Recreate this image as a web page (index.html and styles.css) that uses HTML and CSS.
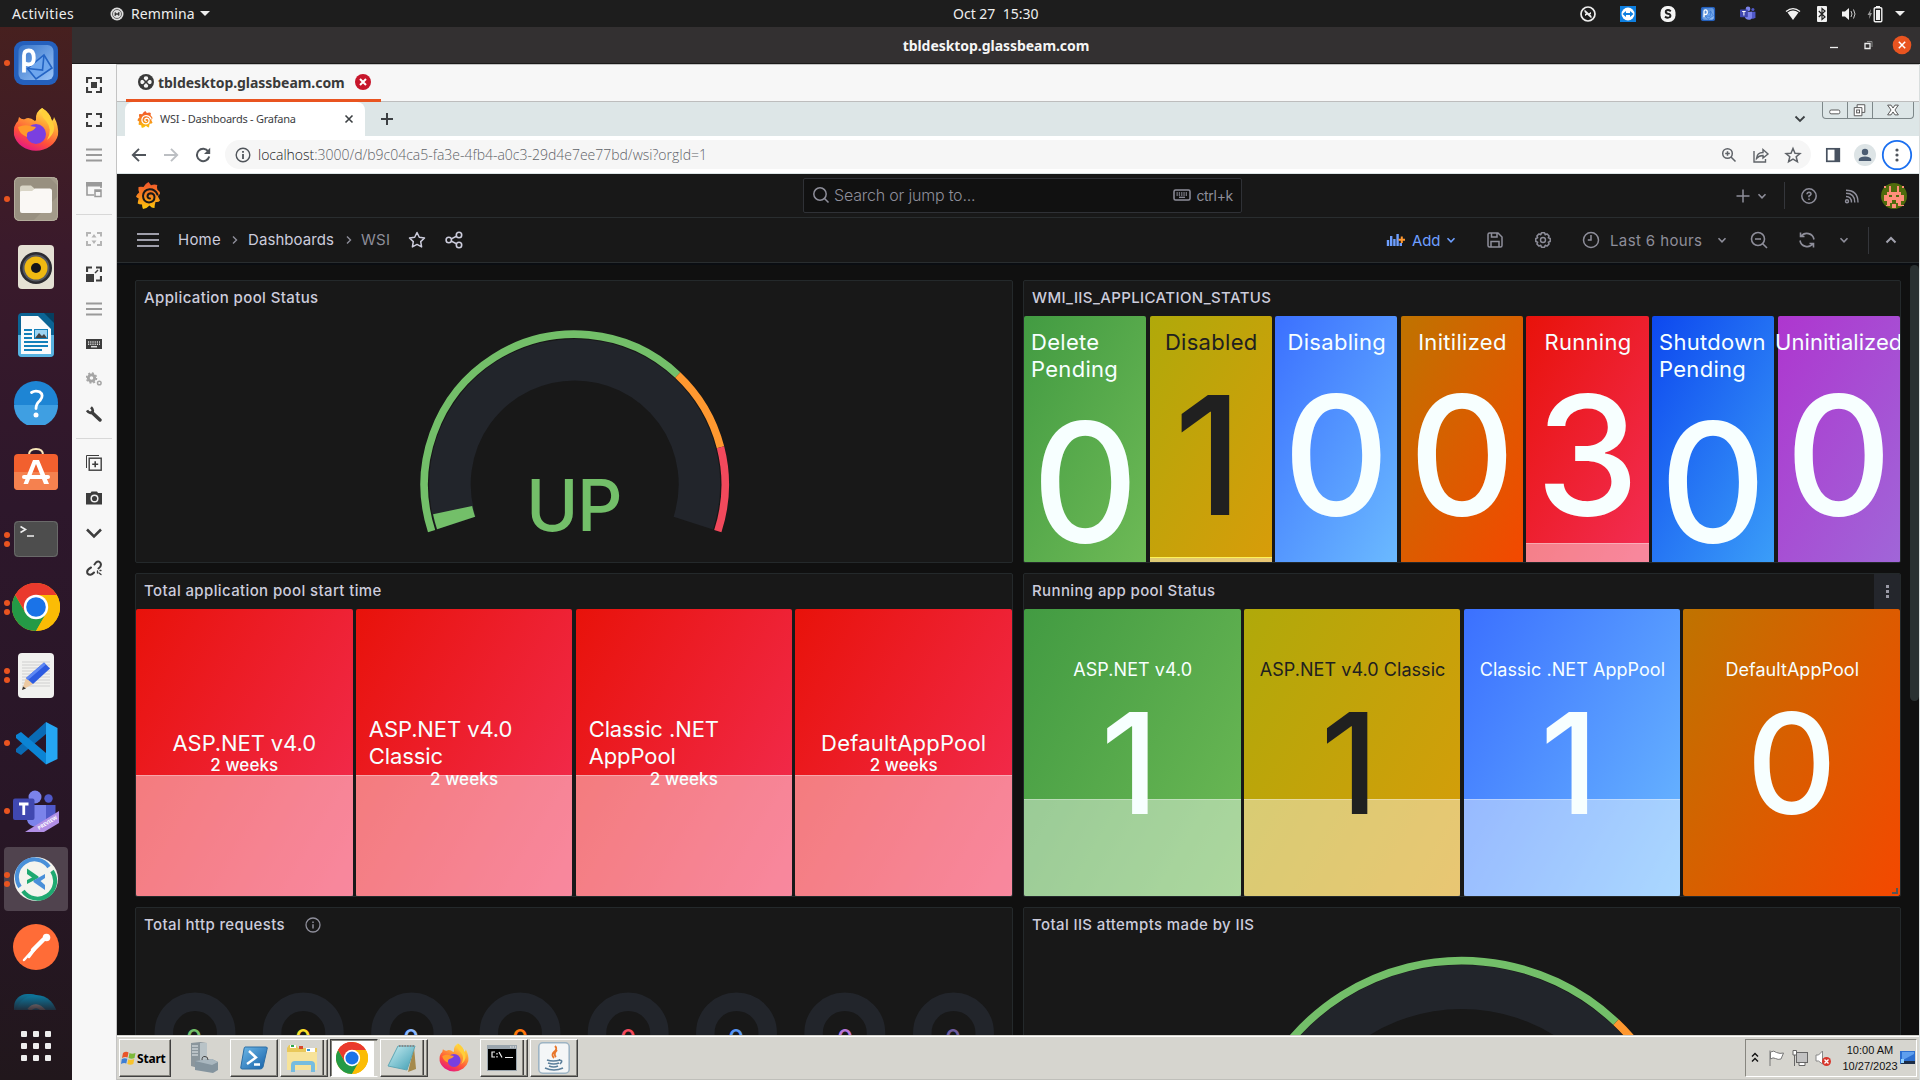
FILE: index.html
```
<!DOCTYPE html>
<html lang="en">
<head>
<meta charset="utf-8">
<title>tbldesktop.glassbeam.com</title>
<link rel="stylesheet" href="styles.css">
</head>
<body>
<svg class="defs" width="0" height="0">
  <defs>
    <linearGradient id="gLogo" x1="0" y1="0" x2="0" y2="1"><stop offset="0" stop-color="#f2552c"/><stop offset=".5" stop-color="#f58220"/><stop offset="1" stop-color="#fdca0a"/></linearGradient>
    <linearGradient id="gFox" x1=".8" y1="0" x2=".3" y2="1"><stop offset="0" stop-color="#fff44f"/><stop offset=".35" stop-color="#ffa436"/><stop offset=".7" stop-color="#ff4f3a"/><stop offset="1" stop-color="#e31587"/></linearGradient>
    <linearGradient id="gBlue" x1="0" y1="0" x2="1" y2="1"><stop offset="0" stop-color="#3674c9"/><stop offset="1" stop-color="#9ac4f8"/></linearGradient>
    <linearGradient id="gPs" x1="0" y1="0" x2="1" y2="1"><stop offset="0" stop-color="#6fb9e8"/><stop offset="1" stop-color="#1560a8"/></linearGradient>
    <linearGradient id="gNote" x1="0" y1="0" x2="1" y2="1"><stop offset="0" stop-color="#c9eef2"/><stop offset="1" stop-color="#3d9db3"/></linearGradient>
    <symbol id="grafana" viewBox="0 0 24 27">
      <path fill="url(#gLogo)" d="M12.500 0 L15 3.200 Q18.500 2 21.300 3 Q20.500 5.500 21.300 7.600 Q24 9.500 24 12 Q22 13.300 22 14.500 L24 18.500 Q22.500 20.500 19.500 20 Q18.700 22.500 18.500 26 Q16 26.300 13.500 23.500 Q11 26.500 7 27 Q6 24.500 6 22.500 Q3 22.500 1.700 21.500 Q2 18.500 2.700 16.500 Q.5 15.500 0 14.500 Q1 12 3.200 10.500 Q2 8 2.500 5 Q5 4.700 7.500 5 Q9.500 1.500 12.500 0Z"/>
      <path fill="none" stroke="currentColor" stroke-width="2" stroke-linecap="round" d="M21.500 12.500 Q19 7 13.500 7.300 Q7.500 8 7 14 Q7.300 20 13 20.500 Q18.500 20 18.500 15 Q18 11.300 14.500 11.300 Q11.500 11.800 11.500 14.500 Q12 16.500 14 16.500"/>
    </symbol>
    <symbol id="firefox" viewBox="0 0 46 46">
      <path fill="url(#gFox)" d="M29 0 Q37 5 39 13 Q41 11 41 9 Q46 18 45 27 A22.500 20 0 0 1 1 27 Q0 17 5 13 L6 9 Q9 12 12 11 Q16 8 22 13 L23 12 Q22 4 29 0Z"/>
      <circle cx="23" cy="26" r="10" fill="#7a3fe0"/>
      <path fill="#ff9a2b" d="M5 19 Q12 16 17 18 L23 19 Q21 23 15 24 Q13 26 14 29 Q6 26 5 19Z"/>
      <path fill="#ffcf3a" d="M29 0 Q27 8 33 13 Q40 21 34 32 Q45 23 39 13 Q37 5 29 0Z"/>
    </symbol>
    <symbol id="chrome" viewBox="0 0 48 48">
      <circle cx="24" cy="24" r="24" fill="#fbbc05"/>
      <path fill="#ea3a2d" d="M24 24 L3.200 12 A24 24 0 0 1 44.800 12Z"/>
      <path fill="#ea3a2d" d="M24 12 H44.800 L36 24 H24Z"/>
      <path fill="#249a46" d="M3.200 12 A24 24 0 0 0 24 48 L34.400 30 L24 24 L13.600 30Z"/>
      <path fill="#ea3a2d" d="M24 12 L13.600 30 L3.200 12 Q10 0 24 0Z"/>
      <path fill="#fbbc05" d="M24 12 H44.800 A24 24 0 0 1 24 48 L34.400 30Z"/>
      <circle cx="24" cy="24" r="12.200" fill="#fff"/><circle cx="24" cy="24" r="9.800" fill="#1a73e8"/>
    </symbol>
    <symbol id="teams" viewBox="0 0 44 42">
      <circle cx="22" cy="7" r="6.500" fill="#7b83eb"/><circle cx="35.500" cy="8.500" r="4.200" fill="#5059c9"/>
      <path fill="#5059c9" d="M30 15 H42.500 V30 Q41 34 36 34 H30Z"/><path fill="#7b83eb" d="M14 15 H33 V30 Q32 37 24 37 Q15 36 14 30Z"/>
      <rect y="8.500" width="21.500" height="21.500" rx="2" fill="#4048b0"/><path stroke="#fff" stroke-width="2.800" d="M6 14 H15.500 M10.750 14 V25"/>
    </symbol>
    <symbol id="pmail" viewBox="0 0 44 44">
      <rect width="44" height="44" rx="9" fill="#2460bd"/><rect x="4.500" y="4" width="35" height="35" rx="6" fill="url(#gBlue)"/>
      <path fill="#6ea6ee" stroke="#2464c4" stroke-width="1.600" d="M13.500 27.500 L30 14 L38 27 L22 38Z"/><path fill="none" stroke="#2464c4" stroke-width="1.600" d="M13.500 27.500 L28.500 29 L30 14"/>
      <path fill="none" stroke="#fff" stroke-width="3.800" d="M10 31.500 V14.500 Q10 9.500 14.800 9.500 Q19.800 9.500 19.800 17 Q19.800 23.500 14.800 23.500 Q12 23.500 10 21.500"/>
    </symbol>
    <symbol id="down" viewBox="0 0 12 12"><path fill="none" stroke="currentColor" stroke-width="1.600" d="M2.500 4.300 L6 7.800 L9.500 4.300"/></symbol>
    <symbol id="lines" viewBox="0 0 16 14"><path stroke="#9a9a9a" stroke-width="2.200" d="M0 1.500H16M0 7H16M0 12.500H16"/></symbol>
  </defs>
</svg>

<header class="topbar">
  <div class="topbar-left"><span class="activities">Activities</span>
    <svg width="14" height="14" viewBox="0 0 14 14"><circle cx="7" cy="7" r="6.500" fill="#ddd"/><circle cx="7" cy="7" r="4.500" fill="none" stroke="#666"/><path stroke="#555" d="M5 9V5.500L9 8.500V5"/></svg>
    <span class="app-name">Remmina</span><i class="caret"></i></div>
  <span class="clock">Oct 27&nbsp; 15:30</span>
  <div class="tray">
    <svg viewBox="0 0 20 20"><circle cx="10" cy="10" r="7" fill="none" stroke="#eee" stroke-width="1.700"/><path fill="#eee" d="M6.500 5.500L11 9.500L7 12V10L8 9.500L6.500 8Z M13.500 14.500L9 10.500L13 8V10L12 10.500L13.500 12Z"/></svg>
    <svg viewBox="0 0 20 20"><rect x="2" y="2" width="16" height="16" fill="#0e7fe0"/><circle cx="10" cy="10" r="6.500" fill="#fff"/><path fill="#0e7fe0" d="M4.500 10L8 7V9H12V7L15.500 10L12 13V11H8V13Z"/></svg>
    <svg viewBox="0 0 20 20"><rect x="2.500" y="2" width="15" height="16" rx="6.500" fill="#f5f5f5"/><path fill="none" stroke="#222" stroke-width="2" d="M12.800 7.200Q10 5 8 6.800Q7 9 10 9.800Q13.500 10.500 12 13Q9.500 14.500 7 12.600"/></svg>
    <svg viewBox="-8 -8 60 60"><use href="#pmail" width="44" height="44"/></svg>
    <svg viewBox="0 0 20 20"><use href="#teams" x="2" y="2" width="16" height="16"/></svg>
    <svg class="ml-25" viewBox="0 0 20 20"><path fill="#f2f2f2" d="M4.500 8.500Q10 4.500 15.500 8.500L10 16Z"/><path fill="none" stroke="#f2f2f2" stroke-width="1.300" d="M3 7.500Q10 1.800 17 7.500"/></svg>
    <svg class="ml-9" viewBox="0 0 20 20"><rect x="5" y="2" width="10" height="16" rx="1" fill="#f2f2f2"/><path fill="none" stroke="#222" stroke-width="1.200" d="M6.800 7L13 13L10 15.500V4.500L13 7L6.800 13"/></svg>
    <svg class="ml-7" viewBox="0 0 20 20"><path fill="#f2f2f2" d="M3 7.500H6L10 4V16L6 12.500H3Z"/><path fill="none" stroke="#f2f2f2" d="M12 7Q14 10 12 13M14.500 5.500Q17.500 10 14.500 14.500" opacity=".8"/></svg>
    <svg class="ml-7" viewBox="0 0 20 20"><path fill="#999" d="M5 5L1.500 11H3.500L3 15L6 9H4.200Z"/><rect x="8.200" y="3.700" width="7.600" height="14" rx="1" fill="none" stroke="#f2f2f2" stroke-width="1.400"/><rect x="10" y="6" width="4" height="10" fill="#f2f2f2"/><rect x="10" y="2" width="4" height="2" fill="#f2f2f2"/></svg>
    <span class="caret-box"><i class="caret"></i></span>
  </div>
</header>

<div class="desktop">
<nav class="dock">
  <div class="slot one"><svg width="44" height="44"><use href="#pmail"/></svg></div>
  <div class="slot"><svg width="46" height="46"><use href="#firefox"/></svg></div>
  <div class="slot one"><svg width="44" height="44" viewBox="0 0 44 44"><rect width="44" height="44" rx="5" fill="#989080"/><path d="M36 1 H43 V8Z M20 43L43 20V43Z" fill="#a39b8a"/><rect x=".5" y=".5" width="43" height="43" rx="5" fill="none" stroke="#b4ad9c"/><path fill="#d9d5c6" d="M6 13V11Q6 8.500 8.500 8.500H17L21 12H35Q38 12 38 15V18H6Z"/><path fill="#faf8f5" d="M6 15Q6 14 8 14H18L21 11.500H36Q38 11.500 38 14V34Q38 36 36 36H8Q6 36 6 34Z"/></svg></div>
  <div class="slot"><svg width="36" height="44" viewBox="0 0 36 44"><rect width="36" height="44" rx="4" fill="#e4e0d4"/><circle cx="18" cy="23" r="16" fill="#2b2b31"/><circle cx="18" cy="23" r="13.500" fill="#555963"/><circle cx="18" cy="23" r="11.500" fill="#efb912"/><circle cx="18" cy="23" r="5" fill="#15151a"/></svg></div>
  <div class="slot"><svg width="36" height="44" viewBox="0 0 36 44"><rect width="36" height="44" rx="4" fill="#0b6494"/><path fill="#58b3e0" d="M0 22H36V40Q36 44 32 44H4Q0 44 0 40Z"/><path fill="#fbfbfb" d="M3 3H20L33 16V41H3Z"/><path fill="#063f60" d="M26 0H36V10Z"/><path stroke="#1480ba" stroke-width="2" d="M6 17H14M6 21H14M6 25H14M6 29H30M6 33H30M6 37H24"/><rect x="16" y="16" width="14" height="10" fill="#1480ba"/><rect x="17" y="17" width="12" height="8" fill="#9dd4f2"/><path fill="#444" d="M17 25L21 20L24 23L26 21L29 25Z"/></svg></div>
  <div class="slot"><svg width="44" height="44" viewBox="0 0 44 44"><circle cx="22" cy="22" r="22" fill="#1e85d4"/><path fill="#3f9fe2" d="M0 24H44A22 22 0 0 1 0 24Z"/><path fill="none" stroke="#fff" stroke-width="2.800" stroke-linecap="round" d="M17.500 11.500Q21 9 25.500 10.800Q30.500 14 26 19.500Q22 23 22 27.500"/><circle cx="22" cy="34" r="2.500" fill="#fff"/></svg></div>
  <div class="slot software"><svg width="44" height="44" viewBox="0 0 44 44"><path fill="none" stroke="#f7e6b8" stroke-width="2" d="M15 10V8Q15 2 22 2Q29 2 29 8V10"/><rect y="7" width="44" height="36" rx="4" fill="#f2602e"/><path fill="#f5814f" d="M0 25H44V39Q44 43 40 43H4Q0 43 0 39Z"/><path fill="#fff" d="M19 13H25L35 37H30L22 17L14 37H9.500Z"/><rect x="8" y="28" width="28" height="4" rx="2" fill="#fff"/></svg></div>
  <div class="slot two"><svg width="44" height="36" viewBox="0 0 44 36"><rect width="44" height="36" rx="4" fill="#4d4d4d"/><rect x=".5" y=".5" width="43" height="35" rx="4" fill="none" stroke="#6a6a6a"/><path fill="none" stroke="#eee" stroke-width="1.600" d="M6.500 5.500L11.500 8.500L6.500 11.500M13 15H20"/></svg></div>
  <div class="slot two"><svg width="48" height="48"><use href="#chrome"/></svg></div>
  <div class="slot two"><svg width="36" height="45" viewBox="0 0 36 45"><rect width="36" height="45" rx="4" fill="#f1f1ef"/><path stroke="#cfcfcf" stroke-width="1" d="M4 9H32M4 12H32M4 15H32M4 18H32M4 21H32M4 24H32M4 27H32M4 30H32M4 33H32"/><path fill="#ecc9a2" d="M4 37L8 25L15 31Z"/><path fill="#333" d="M4 37L5 33.500L8 35.500Z"/><path fill="#2d5be0" d="M8 25L26 9.500L32 15.500L15 31Z"/><path fill="#5e88f4" d="M8 25L26 9.500L28 11.500L10 27Z"/></svg></div>
  <div class="slot one"><svg width="43" height="43" viewBox="0 0 43 43"><path fill="#0a6bb5" d="M1 27L31 0V12L6 33L1 30Z"/><path fill="#0b84d4" d="M1 16V13L6 10L31 31V42.500Z"/><path fill="#25a6f2" d="M31 0L42.500 6V37L31 42.500Z"/></svg></div>
  <div class="slot one"><svg width="46" height="44" viewBox="0 0 46 44"><use href="#teams" width="44" height="42" y="1"/><path fill="#b18fe6" d="M12 43L46 22V34L31 43Z"/><text class="ribbon" transform="translate(26 41) rotate(-32)">PREVIEW</text></svg></div>
  <div class="slot two active"><svg width="44" height="44" viewBox="0 0 44 44"><circle cx="22" cy="22" r="22" fill="#f4f4ee"/><g fill="none" stroke-width="4"><path stroke="#4a90d9" d="M6 30A17.500 17.500 0 0 1 35 10"/><path stroke="#1fa971" d="M38 14A17.500 17.500 0 0 1 9 34"/></g><path fill="#1fa971" d="M13 11.500L24.500 19.500V21L13 27V23L18 20.500L13 17Z"/><path fill="#4a90d9" d="M31 17V21L26.500 24L31 28V33L19.500 25V23.500Z"/></svg></div>
  <div class="slot"><svg width="46" height="46" viewBox="0 0 46 46"><circle cx="23" cy="23" r="23" fill="#ff6c37"/><g fill="none" stroke="#fff" stroke-linecap="round"><path stroke-width="4.500" d="M30 16L20 26"/><path stroke-width="2.500" d="M20 26L11 36M22 25L16 33"/></g><circle cx="33.500" cy="13.500" r="3.800" fill="#fff"/></svg></div>
  <div class="slot clipped"><svg width="44" height="44" viewBox="0 0 44 44"><rect width="30" height="30" rx="13" fill="#0c7ba3"/><circle cx="22" cy="22" r="21" fill="#0a86b0"/><path fill="none" stroke="#a9a9a9" stroke-width="4" d="M30 17Q22 8 15 16"/></svg></div>
  <div class="apps"><i></i><i></i><i></i><i></i><i></i><i></i><i></i><i></i><i></i></div>
</nav>

<section class="window">
  <div class="titlebar"><span class="title">tbldesktop.glassbeam.com</span>
    <div class="win-buttons">
      <svg viewBox="0 0 20 20"><path stroke="#eee" stroke-width="1.300" d="M6 12.500H14"/></svg>
      <svg viewBox="0 0 20 20"><path fill="none" stroke="#eee" stroke-width="1.300" d="M7 8.500H12V13.500H7Z"/><path fill="none" stroke="#888" d="M9 6.500H14V12"/></svg>
      <svg viewBox="0 0 20 20"><circle cx="10" cy="10" r="9.300" fill="#e95420"/><path stroke="#fff" stroke-width="1.500" d="M6.800 6.800L13.200 13.200M13.200 6.800L6.800 13.200"/></svg>
    </div>
  </div>
  <div class="window-body">
    <aside class="tools">
      <svg viewBox="0 0 16 16"><path fill="none" stroke="#3d3d3d" stroke-width="2.200" d="M1 6V1H6M10 1H15V6M15 10V15H10M6 15H1V10"/><rect x="5" y="5" width="6" height="6" fill="#3d3d3d"/></svg>
      <svg viewBox="0 0 16 16"><path fill="none" stroke="#3d3d3d" stroke-width="2.200" d="M1 6V2H6M10 2H15V6M15 10V14H10M6 14H1V10"/></svg>
      <svg viewBox="0 0 16 14"><use href="#lines"/></svg>
      <svg viewBox="0 0 16 16"><path fill="none" stroke="#9a9a9a" stroke-width="1.600" d="M8 13H1V1H15V6"/><rect x="0" y="0" width="16" height="4.500" fill="#9a9a9a"/><rect x="9" y="8" width="6" height="6.500" fill="none" stroke="#9a9a9a" stroke-width="1.500"/><path stroke="#9a9a9a" stroke-width="2" d="M9 9H15"/></svg>
      <hr>
      <svg viewBox="0 0 16 16"><path fill="none" stroke="#b5b5b5" stroke-width="2" d="M1 5.500V2H5M11 2H15V5.500M15 10V14H11M5 14H1V10"/><path fill="#b5b5b5" d="M8 3L10.500 6.500H5.500ZM8 13L5.500 9.500H10.500ZM3 8H5M11 8H13"/></svg>
      <svg viewBox="0 0 16 16"><path fill="none" stroke="#3d3d3d" stroke-width="2.200" d="M1 6V1.500H6M10 1.500H15V6M15 10V14.500H10"/><rect x="0" y="8" width="8" height="8" fill="#3d3d3d"/><path stroke="#3d3d3d" stroke-width="1.500" d="M9 7L12 4"/></svg>
      <svg viewBox="0 0 16 14"><use href="#lines"/></svg>
      <svg viewBox="0 0 16 16"><rect y="3" width="16" height="10" fill="#3d3d3d"/><path stroke="#ddd" stroke-width="1.500" stroke-dasharray="1.200 1" d="M2 6H14M2 8.300H14"/><path stroke="#ddd" stroke-width="1.500" d="M5 10.700H11"/></svg>
      <svg viewBox="0 0 16 16"><g fill="none" stroke="#a5a5a5"><circle cx="5.500" cy="7" r="3.200" stroke-width="2.800"/><circle cx="5.500" cy="7" r="5" stroke-width="1.500" stroke-dasharray="2 1.900"/><circle cx="13.300" cy="12" r="1.800" stroke-width="1.500"/></g></svg>
      <svg viewBox="0 0 16 16"><path stroke="#3d3d3d" stroke-width="3.400" stroke-linecap="round" d="M6 6.500L14 14"/><path fill="none" stroke="#3d3d3d" stroke-width="2.600" d="M1 4.500Q3 8 6 6.500Q8 4 5 1.200"/></svg>
      <hr>
      <svg viewBox="0 0 16 16"><path fill="none" stroke="#3d3d3d" d="M.5 13V.5H13"/><rect x="3.200" y="3.200" width="12" height="12" fill="none" stroke="#3d3d3d" stroke-width="1.400"/><path stroke="#3d3d3d" stroke-width="1.600" d="M9.200 6.200V12.200M6.200 9.200H12.200"/></svg>
      <svg viewBox="0 0 16 16"><path fill="#3d3d3d" d="M0 3H4.500L5.500 1.500H11L12 3H16V14.500H0Z"/><circle cx="8.500" cy="8.500" r="3.300" fill="none" stroke="#f0f0f0" stroke-width="1.500"/></svg>
      <svg viewBox="0 0 16 16"><path fill="none" stroke="#3d3d3d" stroke-width="2.500" d="M1 4.500L8 11.500L15 4.500"/></svg>
      <svg viewBox="0 0 16 16"><g fill="none" stroke="#3d3d3d" stroke-width="2" stroke-linecap="round"><path d="M8.500 4.500L10 2.500Q12.500 .3 14.500 3Q16 6 12.500 8.500M5 7.500Q0 10 1.500 13.500Q4.500 16.500 8 12.500"/><path stroke-width="1.300" d="M11.500 11V13M14 10.500H15M13 13L15 14.500" /></g></svg>
    </aside>

    <div class="session">
      <div class="session-tabs"><div class="session-tab">
        <svg width="16" height="16" viewBox="0 0 16 16"><circle cx="8" cy="8" r="8" fill="#3a3a3a"/><g fill="#f5f5f5"><circle cx="8" cy="4.600" r="2.300"/><circle cx="8" cy="11.400" r="2.300"/><circle cx="4.600" cy="8" r="2.300"/><circle cx="11.400" cy="8" r="2.300"/></g><path stroke="#3a3a3a" stroke-width="1.400" d="M4 4L12 12M12 4L4 12"/></svg>
        <span class="session-name">tbldesktop.glassbeam.com</span>
        <svg width="16" height="16" viewBox="0 0 16 16"><circle cx="8" cy="8" r="8" fill="#c7162b"/><path stroke="#fff" stroke-width="2" d="M5 5L11 11M11 5L5 11"/></svg>
      </div></div>

      <div class="chrome-tabs">
        <div class="chrome-tab">
          <svg class="favicon" width="16" height="17"><use href="#grafana"/></svg>
          <span class="tab-title">WSI - Dashboards - Grafana</span>
          <svg width="10" height="10" viewBox="0 0 10 10"><path stroke="#3c4043" stroke-width="1.600" d="M1.500 1.500L8.500 8.500M8.500 1.500L1.500 8.500"/></svg>
        </div>
        <svg class="new-tab" width="12" height="12" viewBox="0 0 12 12"><path stroke="#3c4043" stroke-width="2" d="M6 0V12M0 6H12"/></svg>
        <svg class="tab-search" width="12" height="12" viewBox="0 0 12 12"><path fill="none" stroke="#3c4043" stroke-width="1.800" d="M1.500 3.500L6 8L10.500 3.500"/></svg>
        <div class="aero">
          <svg viewBox="0 0 25 16"><rect x="7" y="8" width="10.500" height="4" rx="1.500" fill="#fff" stroke="#555"/></svg>
          <svg viewBox="0 0 25 16"><path fill="#fff" stroke="#555" d="M9.500 2.500H17.500V10.500H9.500Z"/><path fill="#fff" stroke="#555" d="M6.500 5.500H14.500V14H6.500Z"/><rect x="9" y="8" width="3" height="3" fill="none" stroke="#555"/></svg>
          <svg viewBox="0 0 41 16"><path fill="#fff" stroke="#555" d="M15 3H18.500L20.500 6L22.500 3H26L22.500 8L26 13H22.500L20.500 10L18.500 13H15L18.500 8Z"/></svg>
        </div>
      </div>

      <div class="address">
        <svg class="nav" viewBox="0 0 16 16"><path fill="none" stroke="#50555b" stroke-width="1.900" d="M15 8H2M8 1.800L1.800 8L8 14.200"/></svg>
        <svg class="nav" viewBox="0 0 16 16"><path fill="none" stroke="#bcbfc3" stroke-width="1.900" d="M1 8H14M8 1.800L14.200 8L8 14.200"/></svg>
        <svg class="nav" viewBox="0 0 16 16"><path fill="none" stroke="#50555b" stroke-width="2" d="M13.300 4.500A6.200 6.200 0 1 0 14.200 9.500"/><path fill="#50555b" d="M15.200 .8V7H9Z"/></svg>
        <div class="omnibox">
          <svg width="16" height="16" viewBox="0 0 16 16"><circle cx="8" cy="8" r="6.800" fill="none" stroke="#50555b" stroke-width="1.400"/><path stroke="#50555b" stroke-width="1.800" d="M8 7V12M8 4V5.800"/></svg>
          <span class="url"><b>localhost</b>:3000/d/b9c04ca5-fa3e-4fb4-a0c3-29d4e7ee77bd/wsi?orgId=1</span>
          <svg viewBox="0 0 20 20"><g fill="none" stroke="#5f6368" stroke-width="1.500"><circle cx="8.500" cy="8.500" r="4.800"/><path d="M12 12L16.500 16.500M8.500 6.200V10.800M6.200 8.500H10.800"/></g></svg>
          <svg viewBox="0 0 20 20"><path fill="none" stroke="#5f6368" stroke-width="1.400" d="M3 6V17H14.500V14M5.500 13.500Q6 7.500 12 7.500V4.500L17 9L12 13V10.500Q8 10.500 5.500 13.500Z"/></svg>
          <svg viewBox="0 0 20 20"><path fill="none" stroke="#5f6368" stroke-width="1.500" d="M10 3.500L12 8.200L17 8.600L13.200 11.800L14.400 16.700L10 14.100L5.600 16.700L6.800 11.800L3 8.600L8 8.200Z"/></svg>
        </div>
        <div class="chrome-menu">
          <svg viewBox="0 0 32 32"><rect x="9.800" y="9.800" width="12.500" height="12.500" fill="none" stroke="#485260" stroke-width="1.700"/><rect x="17.500" y="9" width="5.500" height="14" fill="#485260"/></svg>
          <svg viewBox="0 0 32 32"><circle cx="16" cy="16" r="11" fill="#dde4e6"/><circle cx="16" cy="13" r="3.200" fill="#4b5c72"/><path fill="#4b5c72" d="M9.800 22V20Q11 17.500 16 17.500Q21 17.500 22.200 20V22Z"/></svg>
          <svg viewBox="0 0 32 32"><circle cx="16" cy="16" r="14.200" fill="#fff" stroke="#1a6ff0" stroke-width="1.800"/><circle cx="16" cy="11" r="1.600" fill="#50555b"/><circle cx="16" cy="16" r="1.600" fill="#50555b"/><circle cx="16" cy="21" r="1.600" fill="#50555b"/></svg>
        </div>
      </div>

      <div class="gf-top">
        <svg class="gf-logo" width="24" height="27"><use href="#grafana"/></svg>
        <div class="search">
          <svg width="18" height="18" viewBox="0 0 18 18"><circle cx="8" cy="8" r="6.200" fill="none" stroke="#8e8e9a" stroke-width="1.500"/><path stroke="#8e8e9a" stroke-width="1.600" d="M12.500 12.500L16.500 16.500"/></svg>
          <span class="search-text">Search or jump to...</span>
          <svg width="18" height="12" viewBox="0 0 18 12"><rect x="1" y="1" width="16" height="10" rx="1.500" fill="none" stroke="#8e8e9a" stroke-width="1.500"/><path stroke="#8e8e9a" stroke-width="1.300" stroke-dasharray="1.300 1" d="M3.500 4H15M3.500 6H15"/><path stroke="#8e8e9a" stroke-width="1.300" d="M6 8.300H12"/></svg>
          <span class="kbd">ctrl+k</span>
        </div>
        <div class="bar-actions pad-12">
          <svg viewBox="0 0 20 20"><path stroke="#8e8e9a" stroke-width="1.500" d="M10 3.500V16.500M3.500 10H16.500"/></svg>
          <svg class="chev ml-3"><use href="#down"/></svg>
          <i class="divider ml-16"></i>
          <svg class="ml-14" viewBox="0 0 20 20"><circle cx="10" cy="10" r="7.200" fill="none" stroke="#8e8e9a" stroke-width="1.500"/><path fill="none" stroke="#8e8e9a" stroke-width="1.500" d="M8 8.300Q8.200 6.300 10 6.300Q12.200 6.500 12 8.300Q11.500 9.500 10 10V11.300M10 12.500V14"/></svg>
          <svg class="ml-23" viewBox="0 0 20 20"><g fill="none" stroke="#8e8e9a" stroke-width="1.400"><circle cx="5" cy="15.200" r="1.500"/><path d="M4 10.500Q9.500 10.500 9.500 16.500M4 7.300Q12.800 7.300 12.800 16.500M4 4.200Q16 4.200 16 16.500"/></g></svg>
          <svg class="avatar ml-19" viewBox="0 0 26 26"><circle cx="13" cy="13" r="13" fill="#4f6b0c"/><path fill="#ff8f7a" d="M8 3H10V9H16V3H18V9H20V12H15V14H18V12H23V18H20V22H23V23H17V20H15V17H11V20H9V23H5V22H6V18H3V12H8V14H11V12H6V9H8ZM3 3H5V5H3ZM21 3H23V5H21ZM11 21H15V25H11Z"/></svg>
        </div>
      </div>

      <div class="gf-nav">
        <svg class="burger" width="22" height="14" viewBox="0 0 22 14"><path stroke="#ccccdc" stroke-width="1.600" d="M0 1H22M0 7H22M0 13H22"/></svg>
        <span class="crumb home">Home</span><svg class="sep" viewBox="0 0 6 10"><path fill="none" stroke="#8e8e9a" stroke-width="1.400" d="M1 1.500L4.500 5L1 8.500"/></svg>
        <span class="crumb dash">Dashboards</span><svg class="sep" viewBox="0 0 6 10"><path fill="none" stroke="#8e8e9a" stroke-width="1.400" d="M1 1.500L4.500 5L1 8.500"/></svg>
        <span class="crumb here">WSI</span>
        <svg class="crumb-icon" viewBox="0 0 20 20"><path fill="none" stroke="#ccccdc" stroke-width="1.500" stroke-linejoin="round" d="M10 2.500L12.300 7.300L17.500 8L13.700 11.600L14.600 16.900L10 14.400L5.400 16.900L6.300 11.600L2.500 8L7.700 7.300Z"/></svg>
        <svg class="crumb-icon share" viewBox="0 0 20 20"><g fill="none" stroke="#ccccdc" stroke-width="1.600"><circle cx="4.800" cy="10" r="2.700"/><circle cx="15" cy="5" r="2.700"/><circle cx="15" cy="15" r="2.700"/><path d="M7.300 8.900L12.500 6.200M7.300 11.100L12.500 13.800"/></g></svg>
        <div class="bar-actions pad-22">
          <svg viewBox="0 0 20 20"><path stroke="#6e9fff" stroke-width="2.400" d="M2 16V10M5.200 16V6M8.400 16V9M11.600 16V4M14.800 16V13"/><path stroke="#ff9830" stroke-width="2" d="M15.800 6.500V13M12.600 9.800H19"/></svg>
          <span class="add ml-6">Add</span><svg class="chev link ml-3"><use href="#down"/></svg>
          <svg class="ml-28" viewBox="0 0 20 20"><path fill="none" stroke="#8e8e9a" stroke-width="1.500" d="M3 4.500Q3 3 4.500 3H13L17 7V15.500Q17 17 15.500 17H4.500Q3 17 3 15.500ZM6.500 3V7H12V3M6 17V11.500H14V17"/></svg>
          <svg class="ml-28" viewBox="0 0 20 20"><g fill="none" stroke="#8e8e9a"><circle cx="10" cy="10" r="2.500" stroke-width="1.400"/><path stroke-width="1.500" stroke-linejoin="round" d="M8.500 2.800H11.500L12.200 4.700L14 3.900L16.100 6L15.300 7.800L17.200 8.500V11.500L15.300 12.200L16.100 14L14 16.100L12.200 15.300L11.500 17.200H8.500L7.800 15.300L6 16.100L3.900 14L4.700 12.200L2.800 11.500V8.500L4.700 7.800L3.900 6L6 3.900L7.800 4.700Z"/></g></svg>
          <svg class="ml-28" viewBox="0 0 20 20"><circle cx="10" cy="10" r="7.500" fill="none" stroke="#8e8e9a" stroke-width="1.500"/><path fill="none" stroke="#8e8e9a" stroke-width="1.500" d="M10 5V10H6.800"/></svg>
          <span class="range ml-9">Last 6 hours</span><svg class="chev ml-13"><use href="#down"/></svg>
          <svg class="ml-21" viewBox="0 0 20 20"><g fill="none" stroke="#8e8e9a" stroke-width="1.600"><circle cx="9" cy="9" r="6.500"/><path d="M13.700 13.700L18 18M6 9H12"/></g></svg>
          <svg class="ml-28" viewBox="0 0 20 20"><g fill="none" stroke="#8e8e9a" stroke-width="1.600"><path d="M3.500 2.500V6.500H7.500M16.500 17.500V13.500H12.500M4 6.500A7.200 7.200 0 0 1 17 9.500M16 13.500A7.200 7.200 0 0 1 3 10.500"/></g></svg>
          <svg class="chev ml-21"><use href="#down"/></svg>
          <i class="divider ml-18"></i>
          <svg class="chev ml-16" viewBox="0 0 12 12"><path fill="none" stroke="#a2a2ae" stroke-width="2" d="M1.500 8.500L6 4L10.500 8.500"/></svg>
        </div>
      </div>

      <main class="canvas">
        <div class="grid">
          <article class="panel">
            <h2>Application pool Status</h2>
            <svg class="plot" viewBox="136 315 876 246">
              <g fill="none">
                <path stroke="#22252b" stroke-width="41.500" d="M456.100 522.100A124.750 124.750 0 1 1 693.300 522.100"/>
                <path stroke="#73bf69" stroke-width="40" d="M456.100 522.100A124.750 124.750 0 0 1 452.600 509.100"/>
                <g stroke-width="7.600">
                  <path stroke="#73bf69" d="M431.600 530.100A150.500 150.500 0 0 1 677.700 373.900"/>
                  <path stroke="#ff9830" d="M677.700 373.900A150.500 150.500 0 0 1 720.500 446.200"/>
                  <path stroke="#f2495c" d="M720.500 446.200A150.500 150.500 0 0 1 717.800 530.100"/>
                </g>
              </g>
              <text class="gauge-value" x="573.500" y="529.500">UP</text>
            </svg>
          </article>

          <article class="panel">
            <h2>WMI_IIS_APPLICATION_STATUS</h2>
            <div class="tiles seven">
              <div class="tile green"><p>Delete Pending</p><strong>0</strong></div>
              <div class="tile yellow dark single"><p>Disabled</p><strong class="one-digit">1</strong><i class="area bright" style="height:8px"></i></div>
              <div class="tile blue single"><p>Disabling</p><strong>0</strong></div>
              <div class="tile orange single"><p>Initilized</p><strong>0</strong></div>
              <div class="tile red single"><p>Running</p><strong>3</strong><i class="area" style="height:22px"></i></div>
              <div class="tile deep"><p>Shutdown Pending</p><strong>0</strong></div>
              <div class="tile purple single"><p>Uninitialized</p><strong>0</strong></div>
            </div>
          </article>

          <article class="panel">
            <h2>Total application pool start time</h2>
            <div class="tiles times">
              <div class="tile red single"><p>ASP.NET v4.0</p><em>2 weeks</em><i class="area" style="height:121px"></i></div>
              <div class="tile red"><p>ASP.NET v4.0 Classic</p><em>2 weeks</em><i class="area" style="height:121px"></i></div>
              <div class="tile red"><p>Classic .NET AppPool</p><em>2 weeks</em><i class="area" style="height:121px"></i></div>
              <div class="tile red single"><p>DefaultAppPool</p><em>2 weeks</em><i class="area" style="height:121px"></i></div>
            </div>
          </article>

          <article class="panel">
            <h2>Running app pool Status<span class="menu"><i></i><i></i><i></i></span></h2>
            <div class="tiles pools">
              <div class="tile green single"><p>ASP.NET v4.0</p><strong class="one-digit">1</strong><i class="area" style="height:97px"></i></div>
              <div class="tile yellow dark single"><p>ASP.NET v4.0 Classic</p><strong class="one-digit">1</strong><i class="area" style="height:97px"></i></div>
              <div class="tile blue single"><p>Classic .NET AppPool</p><strong class="one-digit">1</strong><i class="area" style="height:97px"></i></div>
              <div class="tile orange single"><p>DefaultAppPool</p><strong>0</strong><i class="grip"></i></div>
            </div>
          </article>

          <article class="panel">
            <h2>Total http requests<svg class="info" width="16" height="16" viewBox="0 0 16 16"><circle cx="8" cy="8" r="7" fill="none" stroke="#8e8e9a" stroke-width="1.300"/><path stroke="#8e8e9a" stroke-width="1.500" d="M8 7.300V11.500M8 4.500V6"/></svg></h2>
            <svg class="plot" viewBox="136 943 876 92">
              <g fill="none" stroke="#22252b" stroke-width="18.500">
                <circle cx="195" cy="1033" r="31.200"/><circle cx="303.300" cy="1033" r="31.200"/><circle cx="411.600" cy="1033" r="31.200"/><circle cx="520" cy="1033" r="31.200"/>
                <circle cx="628.200" cy="1033" r="31.200"/><circle cx="736.500" cy="1033" r="31.200"/><circle cx="844.800" cy="1033" r="31.200"/><circle cx="953.500" cy="1033" r="31.200"/>
              </g>
              <g class="mini-value">
                <text x="194" y="1047.500" fill="#73bf69">0</text><text x="303" y="1047.500" fill="#fade2a">0</text><text x="411" y="1047.500" fill="#8ab8ff">0</text><text x="520" y="1047.500" fill="#ff780a">0</text>
                <text x="628" y="1047.500" fill="#f2495c">0</text><text x="736" y="1047.500" fill="#5794f2">0</text><text x="845" y="1047.500" fill="#b877d9">0</text><text x="953" y="1047.500" fill="#705da0">0</text>
              </g>
            </svg>
          </article>

          <article class="panel">
            <h2>Total IIS attempts made by IIS</h2>
            <svg class="plot" viewBox="1024 943 876 92">
              <g fill="none">
                <circle cx="1461.700" cy="1184.500" r="197.500" stroke="#22252b" stroke-width="44"/>
                <g stroke-width="7.800">
                  <path stroke="#73bf69" d="M1248.700 1253.700A224 224 0 0 1 1616 1022.200"/>
                  <path stroke="#ff9830" d="M1616 1022.200A224 224 0 0 1 1678.700 1128.800"/>
                </g>
              </g>
            </svg>
          </article>
        </div>
        <i class="scrollbar"></i>
      </main>

      <footer class="taskbar">
        <div class="btn start"><svg width="15" height="15" viewBox="0 0 15 15"><path fill="#e8542a" d="M2 2Q5 0 7.500 1.500L6.500 6.500Q4 5.500 1 7Z"/><path fill="#7db93a" d="M8.500 2Q11 3.500 14.500 2L13.500 7Q10.500 8.500 7.500 7Z"/><path fill="#3e7fd4" d="M.8 8Q3.500 6.500 6.300 7.700L5.300 12.500Q3 11.500 0 13Z"/><path fill="#f8c32c" d="M7.300 8.200Q10 9.500 13.300 8L12.300 13Q9.500 14.500 6.300 13Z"/></svg><span>Start</span></div>
        <div class="task"><svg width="28" height="32" viewBox="0 0 28 32"><path fill="#8b969c" d="M1 1L10 0L17 1V22L8 26L1 24Z"/><path fill="#b9c3c7" d="M10 1H17V21L10 22Z"/><path stroke="#e7ecee" d="M2 4H8M2 7H8M2 10H8M2 13H8"/><path fill="#84949e" d="M5 19L22 17L28 20V28L23 31L5 28Z"/><path fill="#a9b7bf" d="M5 19L22 17L28 20L22 23Z"/><path fill="none" stroke="#444" d="M12 18Q12 14 15 14.500Q18 14.500 18 18"/></svg></div>
        <div class="task btn"><svg width="28" height="24" viewBox="0 0 28 24"><path fill="url(#gPs)" stroke="#2c6ea5" d="M5 1H26Q28 1 27 3.500L23 21Q22.500 23 20 23H2Q0 23 1 20L4 3Q4.300 1 5 1Z"/><path fill="none" stroke="#fff" stroke-width="2.400" d="M9 5L16 11.500L7 18M14 18.500H20"/></svg></div>
        <div class="task btn stack"><svg width="32" height="32" viewBox="0 0 32 30"><path fill="#e9c85a" d="M1 5L3 2H10L12 5H31V27H1Z"/><path fill="#fff" d="M4 2H10V5H4ZM20 5H29V9H20Z"/><path fill="#2fa84f" d="M5 2H8V4H5Z"/><path fill="#d9482b" d="M13 3H17V6H13Z"/><path fill="#3a9ad6" d="M21 6H24V8H21Z"/><path fill="#f7e39a" d="M1 9H31V27H1Z"/><path fill="none" stroke="#76bde0" stroke-width="4" d="M7 29V22Q7 20 9 20H25Q27 20 27 22V29"/></svg></div>
        <div class="task btn pressed"><svg width="32" height="32"><use href="#chrome"/></svg></div>
        <div class="task btn stack"><svg width="30" height="28" viewBox="0 0 30 28"><path fill="#a58a4c" d="M27 3L29 25L21 28Z"/><path fill="url(#gNote)" stroke="#5fa7b5" d="M11 2H28L20 26L1 22Z"/><path stroke="#888" stroke-width="2" stroke-dasharray="1.500 1.200" d="M12 2H28"/></svg></div>
        <div class="task"><svg width="30" height="31"><use href="#firefox"/></svg></div>
        <div class="task btn stack"><svg width="30" height="26" viewBox="0 0 30 26"><rect width="30" height="26" fill="#9aa5ad"/><rect x="1" y="4" width="28" height="21" fill="#000"/><path stroke="#eee" stroke-dasharray="1.500 1" d="M23 2H29"/><path stroke="#eee" stroke-width="1.200" fill="none" d="M8 7H5V12H8M10 8V9.500M10 11V12.500M12 7L15 12.500M18 12.500H26"/></svg></div>
        <div class="task btn"><svg width="32" height="32" viewBox="0 0 32 32"><rect x=".8" y=".8" width="30.400" height="30.400" rx="4" fill="#f4f6f7" stroke="#9db4c4" stroke-width="1.600"/><path fill="none" stroke="#e8762b" stroke-width="1.800" d="M17 4Q20 7 16 10Q13 13 16 16M19 8Q15 12 18 15"/><path fill="none" stroke="#5b7f9b" stroke-width="1.600" d="M9 18Q15 20 22 18M10 21Q16 23 21 21M21 18Q26 18 22 22M7 26Q16 30 25 26M11 24Q16 26 20 24"/></svg></div>
        <div class="notify">
          <svg width="10" height="12" viewBox="0 0 10 12"><path fill="none" stroke="#111" stroke-width="1.400" d="M2 4.500L5 1.500L8 4.500M2 9.500L5 6.500L8 9.500"/></svg>
          <svg class="ml-7" width="18" height="18" viewBox="0 0 18 18"><path fill="#fff" stroke="#777" d="M3 1.500V17M3.500 3Q7 1 9.500 3.500Q13 5 16.500 4L14 10Q11 11 8.500 9.500Q6 8 3.500 10Z"/></svg>
          <svg class="ml-6" width="18" height="18" viewBox="0 0 18 18"><rect x="5.500" y="3.500" width="11" height="10" fill="#c2c2c2" stroke="#666"/><path fill="#fff" stroke="#666" d="M2 1.500H5.500V6H2ZM3.500 6V17M8 13.500V16.500H14V13.500Z"/></svg>
          <svg class="ml-6" width="18" height="18" viewBox="0 0 18 18"><path fill="#fff" stroke="#888" d="M1 6H3.500L7.500 2V15L3.500 12H1Z"/><circle cx="11.500" cy="12.500" r="4.500" fill="#d8372c"/><path stroke="#fff" stroke-width="1.400" d="M9.500 10.500L13.500 14.500M13.500 10.500L9.500 14.500"/></svg>
          <div class="datetime"><span>10:00 AM</span><span>10/27/2023</span></div>
          <svg class="desk" width="15" height="14" viewBox="0 0 15 14"><rect width="15" height="13" fill="#2d6fd0"/><path fill="#5f9fee" d="M2 1H14V3L3 9H2Z"/><rect x="1" y="10" width="14" height="3" fill="#1c2c45"/><rect x="1" y="8" width="3" height="4" fill="#8fd0ff"/></svg>
        </div>
      </footer>
    </div>
  </div>
</section>
</div>
</body>
</html>
```
FILE: styles.css
```
* { box-sizing: border-box; }
body { margin: 0; width: 1920px; height: 1080px; overflow: hidden; display: flex; flex-direction: column; background: #111; font-family: Inter, "Noto Sans", sans-serif; }
svg { display: block; flex: none; }
h2, p, hr { margin: 0; }
i { display: block; font-style: normal; }
span { white-space: nowrap; }
.defs { display: block; height: 0; }

.ml-3 { margin-left: 3px; }
.ml-6 { margin-left: 6px; }
.ml-7 { margin-left: 7px; }
.ml-9 { margin-left: 9px; }
.ml-13 { margin-left: 13px; }
.ml-14 { margin-left: 14px; }
.ml-16 { margin-left: 16px; }
.ml-18 { margin-left: 18px; }
.ml-19 { margin-left: 19px; }
.ml-21 { margin-left: 21px; }
.ml-23 { margin-left: 23px; }
.ml-28 { margin-left: 28px; }

/* GNOME top bar */
.topbar { height: 27px; flex: none; background: #1d1d1d; color: #eee; font: 14px/27px "Noto Sans", sans-serif; display: grid; grid-template-columns: 1fr auto 1fr; align-items: center; }
.topbar-left { display: flex; align-items: center; padding-left: 12px; }
.activities { width: 98px; letter-spacing: .38px; }
.app-name { margin: 0 5px 0 7px; letter-spacing: .1px; }
.clock { width: 86px; transform: translateX(36px); }
.caret { width: 0; height: 0; border: 5px solid transparent; border-top-color: #eee; border-bottom: 0; }
.tray { display: flex; align-items: center; justify-content: flex-end; padding-right: 10px; }
.tray svg { width: 20px; height: 20px; }
.tray svg + svg { margin-left: 20px; }
.tray svg.ml-25 { margin-left: 25px; }
.tray svg.ml-9 { margin-left: 9px; }
.tray svg.ml-7 { margin-left: 7px; }
.caret-box { width: 20px; margin-left: 4px; display: flex; justify-content: center; }

.desktop { flex: 1; display: flex; min-height: 0; }

/* Dock */
.dock { width: 72px; flex: none; padding-top: 2px; background: linear-gradient(#47201f 0, #3a1a2b 220px, #2d172b 480px, #281626 800px, #21171c 1053px); display: flex; flex-direction: column; align-items: center; }
.slot { position: relative; width: 64px; height: 68px; flex: none; display: flex; align-items: center; justify-content: center; }
.slot.software { padding-bottom: 4px; }
.slot.active { height: 64px; margin: 2px 0; background: #50434e; border-radius: 4px; }
.slot.clipped { height: 29px; align-items: flex-start; padding-top: 13px; overflow: hidden; }
.slot.clipped::after { content: ""; position: absolute; inset: 0; background: linear-gradient(transparent 40%, #24171fcc); }
.slot.one::before, .slot.two::before, .slot.two::after { content: ""; position: absolute; left: 0; top: 31px; width: 6px; height: 6px; border-radius: 50%; background: #e95420; }
.slot.two::before { top: 27px; }
.slot.two::after { top: 35.500px; }
.slot.active::before { top: 25px; }
.slot.active::after { top: 33.500px; }
.ribbon { font: 700 5px "Noto Sans", sans-serif; fill: #fff; }
.apps { display: grid; grid-template-columns: repeat(3, 6px); gap: 6px; margin-top: 21px; }
.apps i { width: 6px; height: 6px; border-radius: 1px; background: #eee; }

/* Remote desktop window */
.window { flex: 1; min-width: 0; display: flex; flex-direction: column; }
.titlebar { height: 37px; flex: none; background: #333031; border-bottom: 1px solid #1b1a1a; display: grid; grid-template-columns: 1fr auto 1fr; align-items: center; }
.title { grid-column: 2; color: #f5f5f5; font: 700 14px "Noto Sans", sans-serif; letter-spacing: -.05px; }
.win-buttons { display: flex; justify-content: flex-end; gap: 14px; padding-right: 8px; }
.win-buttons svg { width: 20px; height: 20px; }
.window-body { flex: 1; min-height: 0; display: flex; background: #f7f7f7; }
.tools { width: 45px; flex: none; padding-top: 3px; border-right: 1px solid #c4c4c4; display: flex; flex-direction: column; align-items: center; }
.tools svg { width: 16px; height: 16px; margin: 9.500px 0; }
.tools hr { width: 36px; height: 1px; border: 0; background: #d8d8d8; margin: 7px 0 6px; }

.session { flex: 1; min-width: 0; display: flex; flex-direction: column; border-right: 1px solid #d9dede; }
.session-tabs { height: 38px; flex: none; border-top: 1px solid #c4c4c4; border-bottom: 1px solid #bdbdbd; background: #f7f7f7; padding-left: 9px; display: flex; }
.session-tab { width: 255px; height: 37px; padding: 0 10px 0 12px; display: flex; align-items: center; border-bottom: 3px solid #e95420; }
.session-name { flex: 1; margin-left: 4px; color: #3a3a3a; font: 700 14px "Noto Sans", sans-serif; letter-spacing: -.05px; }

/* Browser chrome */
.chrome-tabs { height: 34px; flex: none; background: #dde6e7; padding-left: 8px; display: flex; align-items: center; }
.chrome-tab { width: 240px; height: 34px; padding: 0 11px 0 12px; background: #fff; border-radius: 8px 8px 0 0; display: flex; align-items: center; }
.favicon { color: #fff; }
.tab-title { flex: 1; margin-left: 7px; padding-bottom: 2px; color: #3c4043; font: 11px "Noto Sans", sans-serif; letter-spacing: -.25px; }
.new-tab { margin-left: 16px; }
.tab-search { margin-left: auto; }
.aero { align-self: flex-start; display: flex; margin: 0 5px 0 16px; height: 17px; border: 1px solid #7d8789; border-top: 0; border-radius: 0 0 4px 4px; width: 92px; }
.aero svg { width: 24px; height: 16px; }
.aero svg + svg { width: 25px; border-left: 1px solid #7d8789; }
.aero svg:last-child { width: 41px; }
.address { height: 38px; flex: none; background: #fff; border-bottom: 1px solid #dde6e7; padding: 0 6px 0 14px; display: flex; align-items: center; }
.nav { width: 16px; height: 16px; margin-right: 16px; }
.nav:nth-child(3) { margin-right: 14px; }
.omnibox { flex: 1; height: 29px; border-radius: 15px; background: #f6f6f6; padding: 0 8px 0 10px; display: flex; align-items: center; gap: 12px; }
.omnibox svg { width: 20px; height: 20px; }
.omnibox svg:first-child { width: 16px; height: 16px; }
.url { flex: 1; margin-left: -5px; color: #5f6368; font: 300 14px "Open Sans", sans-serif; letter-spacing: -.01px; }
.url b { color: #202124; font-weight: 300; }
.chrome-menu { display: flex; margin-left: 6px; }
.chrome-menu svg { width: 32px; height: 32px; }

/* Grafana */
.gf-top, .gf-nav { flex: none; background: #181818; border-bottom: 1px solid #292d2f; display: flex; align-items: center; color: #8e8e9a; }
.gf-top { height: 44px; padding-left: 19px; }
.gf-nav { height: 45px; padding-left: 20px; font-size: 15px; }
.gf-logo { color: #181818; }
.search { width: 439px; height: 35px; margin-left: 643px; padding: 0 8px 1px 8px; background: #111; border: 1px solid #2f3136; border-radius: 2px; display: flex; align-items: center; font-size: 16px; }
.search-text { flex: 1; margin-left: 4px; letter-spacing: -.2px; font-weight: 300; }
.kbd { margin-left: 5px; font-size: 14px; letter-spacing: -.3px; }
.bar-actions { margin-left: auto; display: flex; align-items: center; }
.bar-actions svg { width: 20px; height: 20px; }
.bar-actions svg.chev { width: 12px; height: 12px; }
.bar-actions svg.link { color: #6e9fff; }
.bar-actions svg.avatar { width: 26px; height: 26px; }
.pad-12 { padding-right: 12px; }
.pad-22 { padding-right: 22px; }
.divider { width: 1px; height: 27px; background: #34363b; }
.add { width: 30px; color: #6e9fff; letter-spacing: -.1px; }
.range { width: 93px; letter-spacing: .38px; }
.crumb { color: #ccccdc; padding-bottom: 1px; }
.home { width: 54px; margin-left: 19px; letter-spacing: .24px; }
.dash { width: 98px; margin-left: 10px; letter-spacing: .07px; }
.here { width: 28px; margin-left: 9px; color: #8e8e9a; letter-spacing: .3px; }
.sep { width: 6px; height: 10px; }
.crumb-icon { width: 20px; height: 20px; margin-left: 18px; }
.share { margin-left: 17px; }

.canvas { position: relative; flex: 1; min-height: 0; overflow: hidden; background: #101010; border-top: 2px solid #0a0d12; padding: 15px 0 0 18px; }
.grid { display: grid; grid-template-columns: 878px 878px; grid-template-rows: 283px 324px 140px; gap: 10px; }
.panel { background: #181818; border: 1px solid #24292b; border-radius: 2px; display: flex; flex-direction: column; overflow: hidden; }
.panel h2 { position: relative; height: 35px; flex: none; padding: 0 0 2px 8px; color: #ccccdc; font-size: 15px; font-weight: 500; letter-spacing: .38px; display: flex; align-items: center; }
.info { margin-left: 20px; }
.menu { position: absolute; right: 0; top: 0; width: 26px; height: 35px; background: #24262c; display: flex; flex-direction: column; align-items: center; justify-content: center; gap: 2px; }
.menu i { width: 3px; height: 3px; background: #9a9aa6; }
.plot { width: 876px; }
.gauge-value { font-size: 71px; font-weight: 450; letter-spacing: -1.500px; text-anchor: middle; fill: #73bf69; }
.mini-value { font-size: 25px; font-weight: 500; text-anchor: middle; }

.tiles { flex: 1; display: grid; grid-template-columns: repeat(4, 1fr); gap: 3.330px; color: #f7ffff; }
.tiles.seven { grid-template-columns: repeat(7, 122.280px); gap: 3.340px; }
.tile { position: relative; min-width: 0; border-radius: 2px; display: flex; flex-direction: column; align-items: center; }
.tile p, .tile strong, .tile em { position: relative; z-index: 1; }
.tile p { align-self: stretch; padding: 0 0 0 7px; font-size: 22px; line-height: 27px; letter-spacing: .3px; }
.tile.single p { align-self: center; padding: 0 0 0 1px; white-space: nowrap; }
.tile strong { font-weight: 500; line-height: 1; }
.tile em { font: 500 17px/19px Inter, sans-serif; letter-spacing: .1px; }
.one-digit { padding-right: 5px; }
.dark { color: #202020; }
.seven .tile { padding-top: 13px; border-bottom: 1px solid #ffffff80; }
.seven strong { font-size: 165px; margin-top: 17px; }
.seven .tile.purple p { letter-spacing: .05px; padding: 0; }
.times .tile { justify-content: center; }
.times .tile p { padding: 0 13px; line-height: 26.400px; letter-spacing: -.1px; }
.times .tile p + em { margin-top: .5px; }
.times .tile:last-child p { letter-spacing: .2px; padding: 0; }
.pools .tile { padding-top: 49.500px; }
.pools .tile p { font-size: 18px; line-height: 22px; letter-spacing: .05px; }
.pools strong { font-size: 140px; margin-top: 12.500px; }
.area { position: absolute; left: 0; right: 0; bottom: 0; background: #ffffff6e; border-top: 1px solid #ffffff50; }
.area.bright { border-top: 1px solid #fdf25a; }
.grip { position: absolute; right: 2px; bottom: 2px; width: 6px; height: 6px; border-right: 2px solid #555; border-bottom: 2px solid #555; }
.green { background: linear-gradient(120deg, #429b42, #6eba56); }
.yellow { background: linear-gradient(120deg, #b0a90a, #d89c0a); }
.blue { background: linear-gradient(120deg, #3b70ff, #6bbaff); }
.orange { background: linear-gradient(120deg, #bf7300, #f44800); }
.red { background: linear-gradient(120deg, #e8120a, #f32e56); }
.deep { background: linear-gradient(120deg, #0d48ef, #3b9ef8); }
.purple { background: linear-gradient(120deg, #ae36cf, #a066d8); }
.scrollbar { position: absolute; right: 0; top: 0; width: 9px; height: 436px; border-radius: 5px; background: #2a3132; }

/* Remote taskbar */
.taskbar { height: 45px; flex: none; background: #d6d5cf; border-top: 1px solid #d6d5cf; box-shadow: inset 0 1px #fff, inset 0 -1px #bfbfba; padding: 3px 2px 3px; display: flex; gap: 2px; }
.btn { border: 1px solid; border-color: #fff #404040 #404040 #fff; box-shadow: inset -1px -1px #87867f; }
.start { width: 52px; margin-right: 7px; display: flex; align-items: center; gap: 1px; padding-left: 1px; font: 700 12px "Noto Sans", sans-serif; letter-spacing: -.2px; }
.task { width: 48px; display: flex; align-items: center; justify-content: center; }
.stack { box-shadow: inset -1px -1px #87867f, inset -3px 0 #d6d5cf, inset -4px 0 #404040, inset -5px 0 #87867f; padding-right: 4px; }
.pressed { border-color: #404040 #d6d5cf #fff #404040; background: #fff; box-shadow: inset 1px 1px #87867f, inset -3px 0 #d6d5cf, inset -4px 0 #fff; padding-right: 4px; }
.notify { margin-left: auto; width: 172px; border: 1px solid; border-color: #87867f #fff #fff #87867f; padding-left: 4px; display: flex; align-items: center; }
.datetime { width: 60px; margin-left: 7px; font: 11px/16px "Liberation Sans", sans-serif; color: #111; display: flex; flex-direction: column; align-items: center; }
```
